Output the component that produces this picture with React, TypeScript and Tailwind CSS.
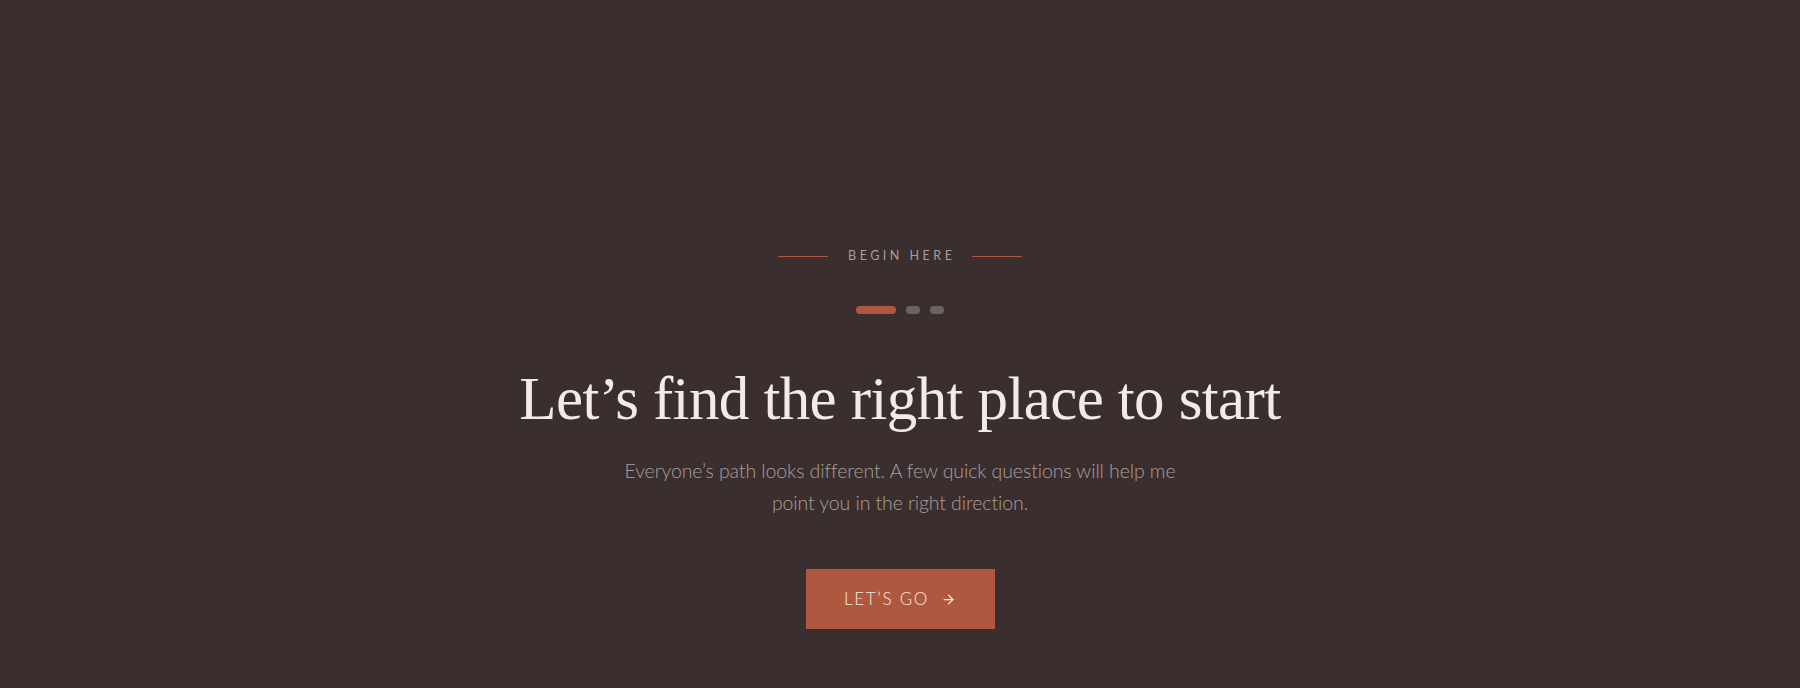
import { ArrowRight } from "lucide-react";

const steps = [true, false, false];

export default function App() {
  return (
    <main className="min-h-screen bg-[#3a2e2e] font-['Lato','Noto_Sans',sans-serif]">
      <section className="flex flex-col items-center px-6 pt-[248px] pb-14 text-center">
        {/* eyebrow */}
        <div className="flex items-center gap-[17px]">
          <span className="h-px w-[50px] bg-[#b0573f]" />
          <span className="text-[12.5px] leading-4 tracking-[0.28em] text-[#a89e9a] pl-[0.28em]">
            BEGIN HERE
          </span>
          <span className="h-px w-[50px] bg-[#b0573f]" />
        </div>

        {/* progress */}
        <div className="mt-[42px] flex items-center gap-[10px]">
          {steps.map((active, i) => (
            <span
              key={i}
              className={
                active
                  ? "h-2 w-10 rounded-full bg-[#b0573f]"
                  : "h-2 w-[14px] rounded-full bg-[#6c6262]"
              }
            />
          ))}
        </div>

        <h1 className="mt-[51px] font-['Liberation_Serif',serif] text-[61px] leading-[1.1] font-normal tracking-[-0.01em] text-[#f3ebe6]">
          Let’s find the right place to start
        </h1>

        <p className="mt-[23px] max-w-[570px] text-[19.5px] leading-[32px] font-light tracking-[-0.005em] text-[#a9a09c]">
          Everyone’s path looks different. A few quick questions will help me
          point you in the right direction.
        </p>

        <button className="mt-[50px] flex h-[60px] w-[189px] items-center justify-center gap-3 bg-[#b0573f] text-[17px] font-light tracking-[0.1em] text-[#f7e9e1]">
          LET’S GO
          <ArrowRight size={15} strokeWidth={2} />
        </button>
      </section>
    </main>
  );
}
